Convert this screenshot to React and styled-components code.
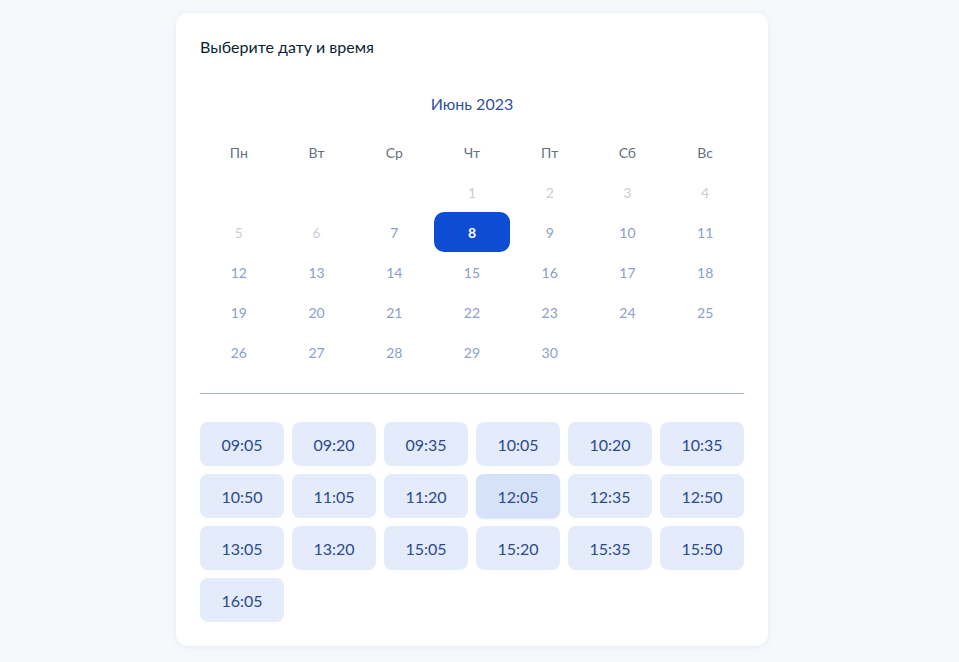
import React from 'react';
import styled, { createGlobalStyle } from 'styled-components';

const GlobalStyle = createGlobalStyle`
  html, body {
    margin: 0;
    padding: 0;
    background: #f6f8fc;
    font-family: Lato, "Noto Sans", sans-serif;
  }
`;

const Page = styled.div`
  min-height: 662px;
  padding: 13px 15px 16px 0;
  box-sizing: border-box;
  background: #f6f8fc;
`;

const Card = styled.div`
  width: 592px;
  margin: 0 auto;
  background: #ffffff;
  border-radius: 12px;
  padding: 24px;
  box-sizing: border-box;
  box-shadow: 0 1px 6px rgba(160, 175, 205, 0.18);
`;

const Title = styled.div`
  font-size: 16px;
  line-height: 20px;
  color: #0b1f33;
`;

const Month = styled.div`
  margin-top: 35px;
  text-align: center;
  font-size: 16px;
  line-height: 24px;
  color: #3252a0;
`;

const Grid = styled.div`
  margin-top: 16px;
  display: grid;
  grid-template-columns: repeat(7, 1fr);
  grid-auto-rows: 40px;
`;

const WeekDay = styled.div`
  display: flex;
  align-items: center;
  justify-content: center;
  font-size: 14px;
  color: #66727f;
`;

const Day = styled.div`
  display: flex;
  align-items: center;
  justify-content: center;
  font-size: 14px;
  border-radius: 10px;
  margin: 0 0.5px;
  color: ${p => (p.$selected ? '#ffffff' : p.$disabled ? '#c9cfd6' : '#8aa0ca')};
  background: ${p => (p.$selected ? '#0d4cd3' : 'transparent')};
  font-weight: ${p => (p.$selected ? 700 : 400)};
`;

const Divider = styled.hr`
  margin: 21px 0 28px;
  border: none;
  border-top: 1px solid #a4b4cc;
`;

const Slots = styled.div`
  display: grid;
  grid-template-columns: repeat(6, 1fr);
  gap: 8px;
`;

const Slot = styled.button`
  height: 44px;
  border: none;
  border-radius: 8px;
  font-family: Lato, "Noto Sans", sans-serif;
  font-size: 16px;
  color: #2d4a8a;
  background: ${p => (p.$active ? '#d6e2f8' : '#e4ebfb')};
  box-shadow: ${p => (p.$active ? '0 1px 2px rgba(120, 145, 200, 0.25)' : 'none')};
  padding: 0;
`;

const weekDays = ['Пн', 'Вт', 'Ср', 'Чт', 'Пт', 'Сб', 'Вс'];
const times = [
  '09:05', '09:20', '09:35', '10:05', '10:20', '10:35',
  '10:50', '11:05', '11:20', '12:05', '12:35', '12:50',
  '13:05', '13:20', '15:05', '15:20', '15:35', '15:50',
  '16:05',
];

export default function App() {
  const cells = [];
  for (let i = 0; i < 3; i++) cells.push(<div key={'e' + i} />);
  for (let d = 1; d <= 30; d++) {
    cells.push(
      <Day key={d} $disabled={d < 7} $selected={d === 8}>
        {d}
      </Day>
    );
  }

  return (
    <Page>
      <GlobalStyle />
      <Card>
        <Title>Выберите дату и время</Title>
        <Month>Июнь 2023</Month>
        <Grid>
          {weekDays.map(w => (
            <WeekDay key={w}>{w}</WeekDay>
          ))}
          {cells}
        </Grid>
        <Divider />
        <Slots>
          {times.map(t => (
            <Slot key={t} $active={t === '12:05'}>
              {t}
            </Slot>
          ))}
        </Slots>
      </Card>
    </Page>
  );
}
